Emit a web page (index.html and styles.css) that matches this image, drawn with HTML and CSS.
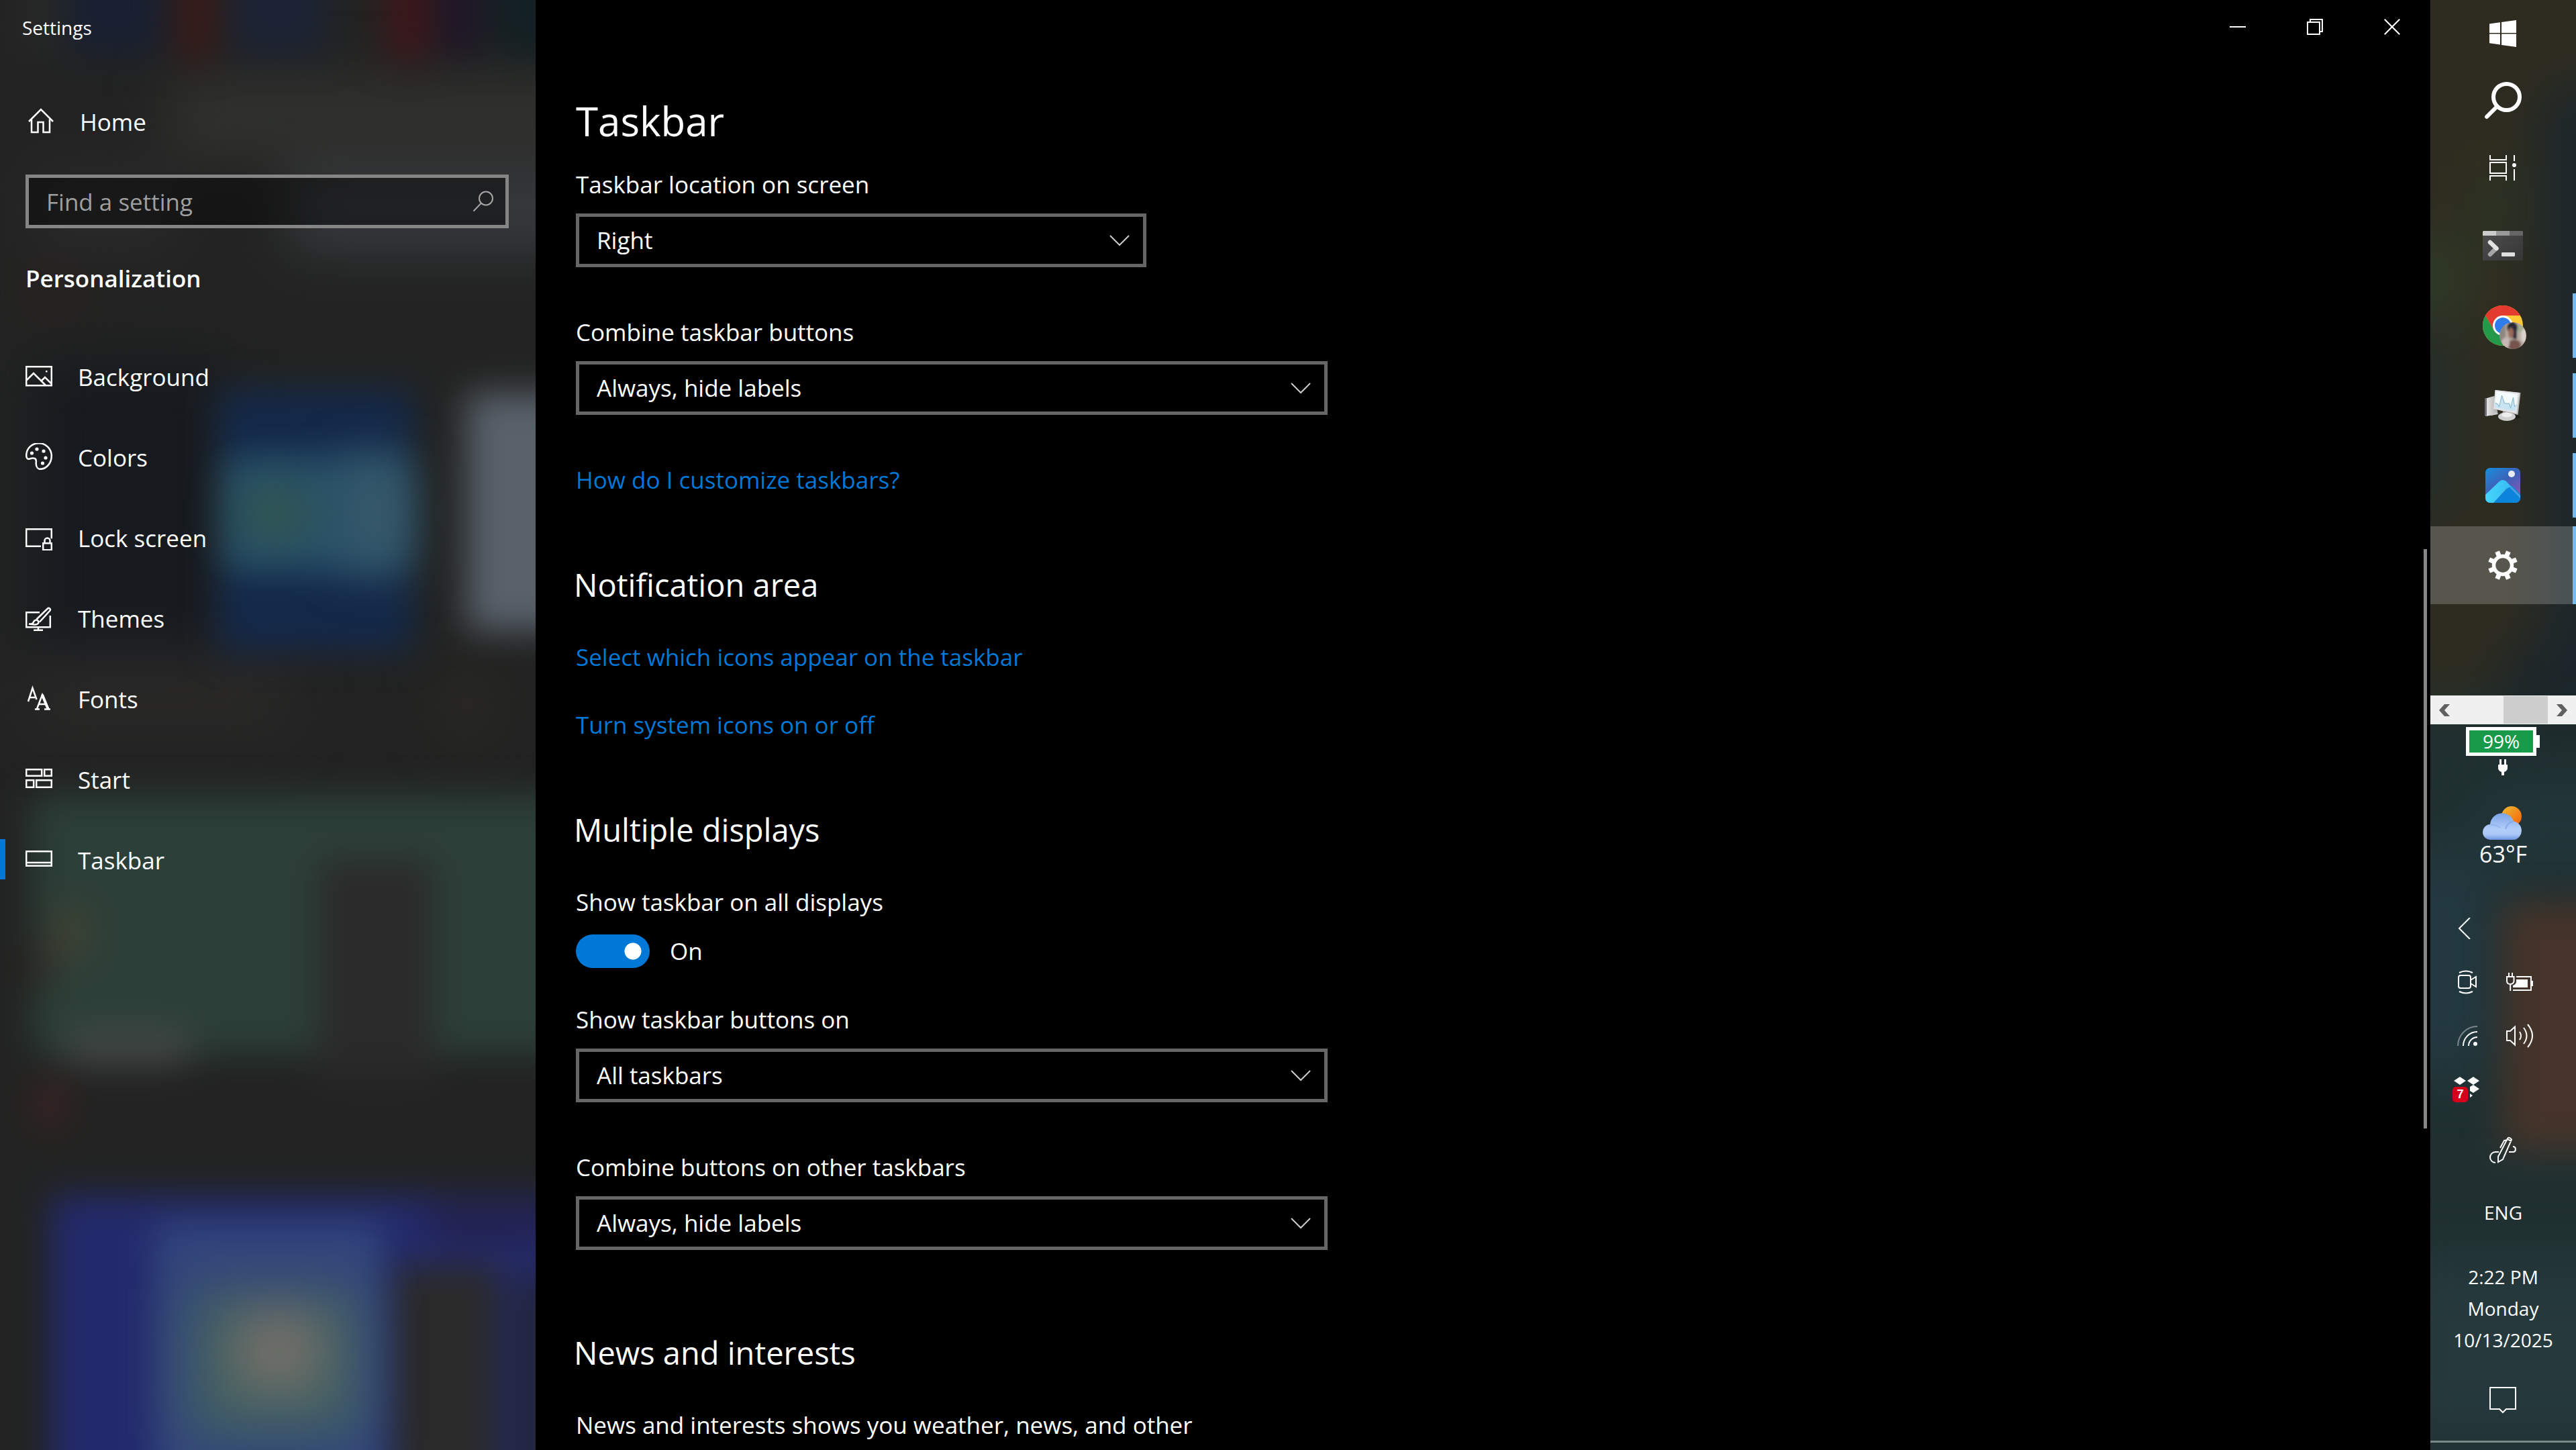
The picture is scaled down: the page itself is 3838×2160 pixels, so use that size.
FILE: index.html
```html
<!DOCTYPE html>
<html lang="en">
<head>
    <meta charset="utf-8">
    <title>Settings</title>
    <link rel="stylesheet" href="styles.css">
</head>
<body>
    <div class="desktop">
        <aside class="sidebar">
            <svg class="acrylic" viewBox="0 0 798 2160" preserveAspectRatio="none" aria-hidden="true">
                <defs>
                    <filter id="soft" x="-100%" y="-100%" width="300%" height="300%" color-interpolation-filters="sRGB"><feGaussianBlur stdDeviation="26"/></filter>
                    <filter id="softer" x="-100%" y="-100%" width="300%" height="300%" color-interpolation-filters="sRGB"><feGaussianBlur stdDeviation="40"/></filter>
                </defs>
                <rect width="798" height="2160" fill="#222322"/>
                <g filter="url(#softer)">
                    <rect x="250" y="110" width="640" height="130" fill="#30312e"/>
                    <rect x="430" y="255" width="460" height="120" fill="#37393d"/>
                    <rect x="50" y="250" width="210" height="120" fill="#2a2a2a"/>
                    <rect x="50" y="540" width="280" height="430" fill="#171a1f"/>
                    <rect x="50" y="970" width="380" height="130" fill="#292827"/>
                    <rect x="660" y="1000" width="70" height="100" fill="#2c2925"/>
                    <rect x="50" y="400" width="60" height="70" fill="#2d2121"/>
                </g>
                <g filter="url(#soft)">
                    <rect x="30" y="-60" width="60" height="140" fill="#272927"/>
                    <rect x="100" y="-60" width="145" height="140" fill="#192032"/>
                    <rect x="262" y="-60" width="60" height="150" fill="#391a18"/>
                    <rect x="345" y="-60" width="140" height="140" fill="#1c2335"/>
                    <rect x="575" y="-60" width="65" height="150" fill="#3e161a"/>
                    <rect x="655" y="-60" width="60" height="140" fill="#1f1529"/>
                    <rect x="735" y="-60" width="130" height="140" fill="#132024"/>
                    <rect x="325" y="580" width="290" height="390" fill="#14294a"/>
                    <rect x="330" y="680" width="280" height="170" fill="#26506a"/>
                    <rect x="695" y="585" width="200" height="355" fill="#59616b"/>
                    <rect x="48" y="1185" width="850" height="385" fill="#2c3f38"/>
                    <rect x="475" y="1280" width="170" height="330" fill="#2b2a2a"/>
                    <rect x="100" y="1535" width="180" height="50" fill="#454949"/>
                    <rect x="78" y="1350" width="55" height="80" fill="#3f4032"/>
                    <rect x="48" y="1410" width="30" height="60" fill="#332c28"/>
                    <rect x="52" y="1615" width="46" height="60" fill="#402224"/>
                    <rect x="75" y="1780" width="850" height="450" fill="#232a6c"/>
                    <rect x="640" y="1790" width="260" height="60" fill="#232250"/>
                    <rect x="230" y="1820" width="340" height="420" fill="#32457c"/>
                    <rect x="585" y="1885" width="160" height="360" fill="#2a2a2a"/>
                    <rect x="770" y="1900" width="120" height="360" fill="#22253a"/>
                </g>
                <g filter="url(#softer)">
                    <rect x="520" y="690" width="80" height="150" fill="#3c5b69"/>
                    <rect x="365" y="735" width="90" height="60" fill="#3b5a3c"/>
                    <rect x="280" y="1920" width="260" height="220" fill="#40605f"/>
                    <rect x="350" y="1955" width="130" height="115" fill="#77706a"/>
                </g>
            </svg>

            <div class="app-title">Settings</div>

            <a class="nav-item home" href="#">
                <svg class="nav-icon" viewBox="0 0 40 40"><path d="M2 21 20 3l18 18M6 17.500v19.500h9.500V22h8v15h9.500V17.500"/></svg>
                Home
            </a>

            <div class="search">
                <input class="search-input" type="text" placeholder="Find a setting" aria-label="Find a setting">
                <svg class="search-icon" viewBox="0 0 32 32"><circle cx="20" cy="11.500" r="10"/><path d="M13 18.500 1.500 30.500"/></svg>
            </div>

            <h2 class="category">Personalization</h2>

            <nav class="nav">
                <a class="nav-item" href="#">
                    <svg class="nav-icon" viewBox="0 0 40 40"><path d="M1.200 6.200h37.600v28H1.200zM2 26l10-10 18 18M24 27l5-5 10 10"/><path d="M30 12h2.500v2.500H30z" fill="#fff" stroke="none"/></svg>
                    Background
                </a>
                <a class="nav-item" href="#">
                    <svg class="nav-icon" viewBox="0 0 40 40"><path d="M20 .2C9.500.2 1.200 8 1.200 18.500c0 4 2 6 5 5 3-1 5-1.500 7.500-.5 3.500 1.500 1.800 5 2 8 .2 4 2.300 7.800 6 7.800C32 38.800 38.800 29 38.800 19S30.500.2 20 .2z"/><g fill="#fff" stroke="none"><circle cx="9.500" cy="15" r="2.600"/><circle cx="17" cy="9" r="2.600"/><circle cx="27" cy="12" r="2.600"/><circle cx="30" cy="22" r="2.600"/><circle cx="25.500" cy="30" r="2.600"/></g></svg>
                    Colors
                </a>
                <a class="nav-item" href="#">
                    <svg class="nav-icon" viewBox="0 0 40 40"><path d="M23 33.800H1.200V8.200h37.600v14M26.200 29.200h12.600v10H26.200zM28.500 29v-3.500a4 4 0 0 1 8 0V29"/></svg>
                    Lock screen
                </a>
                <a class="nav-item" href="#">
                    <svg class="nav-icon" viewBox="0 0 40 40"><path d="M21 12.200H1.200v22h35.600V17M19 34v5M12 38.800h14M5 29.500c4 0 6 0 7-3s5-4 6.800-1.500c2 3-1 5.500-4.800 5.500zM16.500 22.500 33 6.500c2-1.800 5 .8 3.500 3L21 26.500"/></svg>
                    Themes
                </a>
                <a class="nav-item" href="#">
                    <svg class="nav-icon" viewBox="0 0 40 40"><path d="M4 25 10.500 5l6 17M6 19h8" /><path d="M14 36.500h7M28 36.500h9M17 36 25 15l9 21M20 29h11" /><path d="m25 15 8.500 21" stroke-width="4"/></svg>
                    Fonts
                </a>
                <a class="nav-item" href="#">
                    <svg class="nav-icon" viewBox="0 0 40 40"><path d="M1.200 6.200h23v9.600h-23zM28.200 6.200h10.600v9.600H28.200zM1.200 22.200h11v10.600h-11zM16.200 22.200h22.600v10.600H16.200z"/></svg>
                    Start
                </a>
                <a class="nav-item selected" href="#">
                    <svg class="nav-icon" viewBox="0 0 40 40"><path d="M1.200 8.200h37.600v21.600H1.200zM1.200 25h37.600"/></svg>
                    Taskbar
                </a>
            </nav>
        </aside>

        <main class="content">
            <div class="window-buttons">
                <button class="window-button" aria-label="Minimize"><svg viewBox="0 0 24 24"><path d="M0 12h24"/></svg></button>
                <button class="window-button" aria-label="Restore"><svg viewBox="0 0 24 24"><path d="M1 5h18v18H1zM5 5V1h18v18h-4"/></svg></button>
                <button class="window-button" aria-label="Close"><svg viewBox="0 0 24 24"><path d="m.8.800 22.400 22.400M23.200.800.800 23.200"/></svg></button>
            </div>

            <div class="page">
                <h1 class="page-title">Taskbar</h1>

                <section class="section">
                    <div class="field">
                        <label for="location">Taskbar location on screen</label>
                        <div class="combo combo-narrow">
                            <select id="location"><option>Right</option></select>
                            <svg viewBox="0 0 30 17"><path d="m1 1 14 14L29 1"/></svg>
                        </div>
                    </div>
                    <div class="field">
                        <label for="combine">Combine taskbar buttons</label>
                        <div class="combo">
                            <select id="combine"><option>Always, hide labels</option></select>
                            <svg viewBox="0 0 30 17"><path d="m1 1 14 14L29 1"/></svg>
                        </div>
                    </div>
                    <a class="link" href="#">How do I customize taskbars?</a>
                </section>

                <section class="section">
                    <h2 class="section-title">Notification area</h2>
                    <a class="link" href="#">Select which icons appear on the taskbar</a>
                    <a class="link" href="#">Turn system icons on or off</a>
                </section>

                <section class="section">
                    <h2 class="section-title">Multiple displays</h2>
                    <div class="toggle-field">
                        <label for="all-displays">Show taskbar on all displays</label>
                        <div class="toggle-row">
                            <input class="toggle" id="all-displays" type="checkbox" role="switch" checked>
                            <span>On</span>
                        </div>
                    </div>
                    <div class="field">
                        <label for="show-on">Show taskbar buttons on</label>
                        <div class="combo">
                            <select id="show-on"><option>All taskbars</option></select>
                            <svg viewBox="0 0 30 17"><path d="m1 1 14 14L29 1"/></svg>
                        </div>
                    </div>
                    <div class="field">
                        <label for="combine-other">Combine buttons on other taskbars</label>
                        <div class="combo">
                            <select id="combine-other"><option>Always, hide labels</option></select>
                            <svg viewBox="0 0 30 17"><path d="m1 1 14 14L29 1"/></svg>
                        </div>
                    </div>
                </section>

                <section class="section">
                    <h2 class="section-title">News and interests</h2>
                    <p class="text">News and interests shows you weather, news, and other</p>
                </section>
            </div>
            <div class="page-scroll"></div>
        </main>

        <div class="taskbar">
            <svg class="acrylic" viewBox="0 0 217 2160" preserveAspectRatio="none" aria-hidden="true">
                <rect width="217" height="2160" fill="#203031"/>
                <g filter="url(#softer)">
                    <rect x="-90" y="-90" width="400" height="1130" fill="#2e2c20"/>
                    <rect x="170" y="130" width="140" height="860" fill="#1b262c"/>
                    <rect x="-60" y="360" width="110" height="110" fill="#2e3c29"/>
                    <rect x="70" y="250" width="60" height="120" fill="#2b3424"/>
                    <rect x="-80" y="500" width="110" height="260" fill="#212e2c"/>
                    <rect x="110" y="960" width="200" height="130" fill="#1c262a"/>
                    <rect x="-60" y="1270" width="160" height="330" fill="#233940"/>
                    <rect x="80" y="1180" width="230" height="110" fill="#22363b"/>
                    <rect x="-60" y="1880" width="400" height="260" fill="#26393d"/>
                </g>
                <rect x="108" y="1345" width="220" height="370" fill="#46342a" filter="url(#soft)"/>
            </svg>

            <button class="task-button" aria-label="Start">
                <svg width="40" height="40" viewBox="0 0 40 40" fill="#fff"><path d="M0 5.500 16 3.300V19H0zM18 3 40 0v19H18zM0 20.500h16v16L0 34.300zM18 20.500h22V40l-22-3z"/></svg>
            </button>
            <button class="task-button" aria-label="Search">
                <svg width="56" height="56" viewBox="0 0 56 56" fill="none" stroke="#fff" stroke-width="6" stroke-linecap="round"><circle cx="33.500" cy="22.500" r="19.500"/><path d="M19.500 36.500 4 52"/></svg>
            </button>
            <button class="task-button" aria-label="Task View">
                <svg width="40" height="40" viewBox="0 0 40 40" fill="none" stroke="#fff" stroke-width="2"><path d="M1 1v7h24V1M1 12h24v16H1zM1 39v-7h24v7M37 1v9M37 22v17"/><circle cx="37" cy="16" r="3" fill="#fff" stroke="none"/></svg>
            </button>

            <div class="apps">
                <button class="app-button" aria-label="Terminal">
                    <svg width="60" height="44" viewBox="0 0 60 44">
                        <defs><linearGradient id="term" x2="1" y2="1"><stop stop-color="#4e4e4e"/><stop offset="1" stop-color="#363636"/></linearGradient></defs>
                        <rect width="60" height="44" rx="1.500" fill="url(#term)"/>
                        <path d="M1 0h19v7H0V1z" fill="#ccc"/><path d="M20 0h20v7H20z" fill="#999"/><path d="M40 0h19l1 1v6H40z" fill="#666"/>
                        <path d="m11 35 9-9" stroke="#a5a5a5" stroke-width="6.500" stroke-linecap="round"/>
                        <path d="m11 17 9.500 9" stroke="#e2e2e2" stroke-width="6.500" stroke-linecap="round"/>
                        <rect x="28" y="32" width="20" height="6" rx="1" fill="#dedede"/>
                    </svg>
                </button>
                <button class="app-button running" aria-label="Google Chrome">
                    <svg width="70" height="70" viewBox="-35 -35 70 70">
                        <defs>
                            <clipPath id="face"><circle cx="15" cy="15" r="20"/></clipPath>
                            <filter id="haze"><feGaussianBlur stdDeviation="1.500"/></filter>
                        </defs>
                        <circle r="30" fill="#fcc934"/>
                        <path d="M-26 -15A30 30 0 0 1 26 -15H0L-13 7.500z" fill="#e33b2e"/>
                        <path d="M-26 -15A30 30 0 0 0 0 30L13 7.500-13 7.500z" fill="#25994a"/>
                        <circle r="15" fill="#fff"/><circle r="12" fill="#2f7ded"/>
                        <g clip-path="url(#face)"><g filter="url(#haze)">
                            <path d="M-8-8h46v46H-8z" fill="#b9aca3"/>
                            <path d="M-6 0 4-6v40h-10z" fill="#8b867f"/>
                            <ellipse cx="24" cy="4" rx="8" ry="6" fill="#a5ae93"/>
                            <ellipse cx="14" cy="3" rx="8" ry="9" fill="#282833"/>
                            <path d="M15 0h6v20h-6z" fill="#25283a"/>
                            <ellipse cx="12" cy="11" rx="4" ry="8" fill="#9b6a58"/>
                            <ellipse cx="17" cy="29" rx="10" ry="8" fill="#75544b"/>
                            <ellipse cx="31" cy="15" rx="4" ry="10" fill="#dcd4cd"/>
                            <ellipse cx="4" cy="26" rx="6" ry="8" fill="#c9b9b5"/>
                        </g></g>
                    </svg>
                </button>
                <button class="app-button running" aria-label="Performance Monitor">
                    <svg width="56" height="48" viewBox="0 0 56 48">
                        <defs><linearGradient id="metal" x2="1"><stop stop-color="#f0f0f0"/><stop offset="1" stop-color="#a8a8a8"/></linearGradient></defs>
                        <path d="m1 14 14-4 6 27-18 3-2-2z" fill="url(#metal)"/><path d="m1 14 3-1v27l-3-2z" fill="#6d6b75"/>
                        <path d="m9 38 10-4v3l-8 2z" fill="#ccc"/>
                        <ellipse cx="45" cy="41" rx="9" ry="3" fill="#000" opacity=".3"/>
                        <path d="m28 32 12 1 1 6H27z" fill="#999"/>
                        <ellipse cx="34" cy="40.500" rx="13" ry="6.500" fill="#cfcfcf"/><ellipse cx="34" cy="38" rx="8" ry="3.500" fill="#eee"/>
                        <path d="m16.500 1 38 4-4 33L14 29z" fill="#b7b7b7"/><path d="m16.500 1 36 4-4 31L14 29z" fill="#e2e2e2"/>
                        <path d="m18 3 32 4-3 26-31-6z" fill="#f5fafc"/>
                        <path d="m16.500 20 4 2 2 4 4-17 4 12h7l2 7 4-16 2 14 3-3-1.500 10-31-6z" fill="#c8e3f2"/>
                        <path d="m16.500 20 4 2 2 4 4-17 4 12h7l2 7 4-16 2 14 3-3" fill="none" stroke="#81b4cf"/>
                    </svg>
                </button>
                <button class="app-button running" aria-label="Photos">
                    <svg width="52" height="52" viewBox="0 0 52 52">
                        <defs>
                            <linearGradient id="sky" x2=".7" y2="1"><stop stop-color="#168ede"/><stop offset=".5" stop-color="#3d62b8"/><stop offset="1" stop-color="#8a55bb"/></linearGradient>
                            <linearGradient id="peak" x2="1" y2="0"><stop stop-color="#45d5fb"/><stop offset="1" stop-color="#35bdf3"/></linearGradient>
                            <clipPath id="tile"><rect width="52" height="52" rx="7"/></clipPath>
                        </defs>
                        <g clip-path="url(#tile)">
                            <path d="M0 0h52v52H0z" fill="url(#sky)"/>
                            <path d="M8 56 33 30l7-3 16 16v13z" fill="#0b84dc"/>
                            <path d="m37 30 15 15v-4L38 27z" fill="#4c9fe0"/>
                            <path d="M0 40 21 20q5-4 10 0l8 8.500q-4-.5-8 3L12 52H0z" fill="url(#peak)"/>
                        </g>
                        <circle cx="39" cy="9" r="5" fill="#e9edf3"/>
                    </svg>
                </button>
                <button class="app-button running active" aria-label="Settings">
                    <svg width="46" height="46" viewBox="-23 -23 46 46" fill="none" stroke="#fff">
                        <circle r="13.500" stroke-width="5.500"/>
                        <path stroke-width="7" d="M8.400-20.300 5.700-13.900M20.300-8.400 13.900-5.700M20.300 8.400 13.900 5.700M8.400 20.300 5.700 13.900M-8.400 20.300-5.700 13.900M-20.300 8.400-13.900 5.700M-20.300-8.400-13.900-5.700M-8.400-20.300-5.700-13.900"/>
                    </svg>
                </button>
            </div>

            <div class="toolbar-scroll">
                <button class="scroll-arrow" aria-label="Scroll left"><svg width="16" height="18" viewBox="0 0 16 18"><path d="M8 0h8L8 9l8 9H8L0 9z" fill="#606060"/></svg></button>
                <div class="scroll-track"><div class="scroll-thumb"></div></div>
                <button class="scroll-arrow" aria-label="Scroll right"><svg width="16" height="18" viewBox="0 0 16 18"><path d="M8 0H0l8 9-8 9h8l8-9z" fill="#606060"/></svg></button>
            </div>

            <div class="battery"><div class="battery-level">99%</div><div class="battery-tip"></div></div>
            <svg class="plug" width="14" height="24" viewBox="0 0 14 24" fill="#fff"><path d="M2 0h3v8h4V0h3v8h2v5q0 4-5 6v5H5v-5q-5-2-5-6V8h2z"/></svg>

            <div class="weather">
                <svg width="62" height="50" viewBox="0 0 62 50">
                    <defs>
                        <linearGradient id="sun" x2="1" y2="1"><stop stop-color="#f0bd35"/><stop offset="1" stop-color="#f05d05"/></linearGradient>
                        <linearGradient id="cloud" x2="0" y2="1"><stop stop-color="#7ba3ea"/><stop offset=".6" stop-color="#b2cdf8"/><stop offset=".8" stop-color="#aac8f6"/><stop offset="1" stop-color="#6c94e0"/></linearGradient>
                    </defs>
                    <circle cx="43" cy="15" r="15" fill="url(#sun)"/>
                    <path d="M12 50a11.500 11.500 0 0 1-1-23 18 18 0 0 1 35-4.500A14 14 0 0 1 47 50z" fill="url(#cloud)"/>
                    <path d="M34 34q2-9 11-11.500" fill="none" stroke="#86abec" stroke-width="2"/><path d="M11 28q9-1 15 4" fill="none" stroke="#93b6f0" stroke-width="2"/>
                </svg>
                <div class="temperature">63°F</div>
            </div>

            <div class="tray">
                <button class="tray-button wide" aria-label="Show hidden icons"><svg width="28" height="32" viewBox="0 0 28 32"><path d="M18 0 2 16l16 16"/></svg></button>
                <button class="tray-button" aria-label="Meet Now"><svg width="30" height="36" viewBox="0 0 30 36"><rect x="2" y="8" width="18" height="19" rx="3"/><path d="m20 15 8-5v15l-8-5M3 4q10-5 20 0M3 32q10 5 20 0"/></svg></button>
                <button class="tray-button" aria-label="Power"><svg width="40" height="28" viewBox="0 0 40 28"><path d="M15 6h22v20H10M4 0v6M9 0v6M1 6h10.500v7q-1 4-5.500 4t-5-4zM6.200 17v10"/><path d="M15 10h17v12H10v-3q4-1 5-5zM37 12h3v8h-3z" fill="#fff" stroke="none"/></svg></button>
                <button class="tray-button" aria-label="Wi-Fi"><svg width="30" height="30" viewBox="0 0 30 30"><path d="M1 30A29 29 0 0 1 30 1" opacity=".4"/><path d="M9 30A21 21 0 0 1 30 9M17 30A13 13 0 0 1 30 17"/><circle cx="27" cy="27" r="3" fill="#fff" stroke="none"/></svg></button>
                <button class="tray-button" aria-label="Volume"><svg width="40" height="36" viewBox="0 0 40 36"><path d="M1 11h5l7-6.500v27L6 25H1zM20 12q4 6 0 12M26 6q9 12 0 24M32 1q14 17 0 34"/></svg></button>
                <button class="tray-button" aria-label="Dropbox">
                    <svg width="44" height="38" viewBox="0 0 44 38"><g fill="#fff" stroke="none"><path d="m2 6 9-6 9 6-9 6zM22 6l9-6 9 6-9 6zM26 15l5-3 9 6-9 6-5-3zM26 25l4 3-4 3z"/></g></svg>
                    <span class="badge">7</span>
                </button>
            </div>

            <button class="task-button" aria-label="Windows Ink Workspace">
                <svg width="40" height="40" viewBox="0 0 40 40" fill="none" stroke="#fff" stroke-width="2"><path d="M14 23H9A8 8 0 0 0 9 39M29 23h7c4-1 4-8-1-8M13 38v-8L27 3q3-3 6 1.500L20 34zM27 4l6 3M16 17l6-11q3-1 4 0"/></svg>
            </button>
            <div class="language">ENG</div>
            <div class="clock">2:22 PM<br>Monday<br>10/13/2025</div>
            <button class="task-button notifications" aria-label="Notifications">
                <svg width="40" height="40" viewBox="0 0 40 40" fill="none" stroke="#fff" stroke-width="2"><path d="M1 1h38v32H25l-5 5-5-5H1z"/></svg>
            </button>
            <button class="show-desktop" aria-label="Show desktop"></button>
        </div>
    </div>
</body>
</html>
```

FILE: styles.css
```css
* {
    box-sizing: border-box;
}
body {
    margin: 0;
    background: #000;
    color: #fff;
    font-family: "Segoe UI", "Open Sans", sans-serif;
    font-size: 35px;
    line-height: 50px;
}
button {
    padding: 0;
    border: 0;
    background: none;
    color: inherit;
    font: inherit;
}
h1, h2, p {
    margin: 0;
}
.desktop {
    display: flex;
    height: 100vh;
    overflow: hidden;
}
.acrylic {
    position: absolute;
    top: 0;
    left: 0;
    z-index: -1;
    width: 100%;
    height: 100%;
}

/* left navigation */
.sidebar {
    position: relative;
    z-index: 0;
    flex: none;
    width: 798px;
    overflow: hidden;
}
.app-title {
    height: 80px;
    padding-left: 33px;
    font-size: 28px;
    line-height: 82px;
}
.nav-item {
    display: flex;
    align-items: center;
    gap: 38px;
    height: 120px;
    padding: 4px 0 0 38px;
    color: #fff;
    text-decoration: none;
}
.nav-item.home {
    height: 200px;
    margin-bottom: -20px;
    padding-left: 41px;
}
.nav-icon {
    width: 40px;
    height: 40px;
    margin-bottom: 4px;
    fill: none;
    stroke: #fff;
    stroke-width: 2.5px;
}
.nav-item.selected {
    background: linear-gradient(#0078d7, #0078d7) 0 50% / 8px 60px no-repeat;
}
.search {
    position: relative;
    margin: 0 40px 50px 38px;
}
.search-input {
    display: block;
    width: 100%;
    height: 80px;
    padding: 0 80px 0 26px;
    border: 5px solid #858585;
    border-radius: 0;
    background: rgba(0, 0, 0, 0.4);
    color: #fff;
    font: inherit;
}
.search-input::placeholder {
    color: #9f9f9f;
    opacity: 1;
}
.search-icon {
    position: absolute;
    top: 24px;
    right: 22px;
    width: 32px;
    height: 32px;
    fill: none;
    stroke: #a6a6a6;
    stroke-width: 2px;
}
.category {
    padding-left: 38px;
    margin-bottom: 60px;
    font-size: 35px;
    font-weight: 600;
}

/* settings page */
.content {
    position: relative;
    flex: 1;
    overflow: hidden;
}
.window-buttons {
    display: flex;
    justify-content: flex-end;
}
.window-button {
    width: 115px;
    height: 80px;
}
.window-button svg {
    display: block;
    width: 24px;
    height: 24px;
    margin: 0 auto;
    fill: none;
    stroke: #fff;
    stroke-width: 2px;
}
.page {
    padding: 60px 60px 0;
}
.page-title {
    margin-bottom: 30px;
    font-size: 60px;
    font-weight: 400;
    line-height: 80px;
}
.section {
    display: flex;
    flex-direction: column;
    align-items: flex-start;
    margin-bottom: 101px;
}
.section-title {
    margin: 0 0 53px -3px;
    font-size: 47px;
    font-weight: 400;
    line-height: 60px;
}
.field {
    width: 1120px;
    max-width: 100%;
    margin-bottom: 72px;
}
.field:last-child {
    margin-bottom: 22px;
}
.field label,
.toggle-field label {
    display: block;
}
.combo {
    position: relative;
    margin-top: 18px;
}
.combo-narrow {
    width: 850px;
}
.combo select {
    display: block;
    width: 100%;
    height: 80px;
    padding: 0 26px;
    border: 5px solid #666;
    border-radius: 0;
    background: #000;
    color: #fff;
    font: inherit;
    appearance: none;
}
.combo svg {
    position: absolute;
    top: 32px;
    right: 25px;
    width: 30px;
    height: 17px;
    fill: none;
    stroke: #ccc;
    stroke-width: 2px;
    pointer-events: none;
}
.link {
    color: #0078d7;
    text-decoration: none;
}
.link + .link {
    margin-top: 51px;
}
.toggle-field {
    margin-bottom: 52px;
}
.toggle-row {
    display: flex;
    align-items: center;
    gap: 30px;
    margin-top: 23px;
}
.toggle {
    width: 110px;
    height: 50px;
    margin: 0;
    border-radius: 25px;
    background: radial-gradient(circle at 85px 25px, #fff 12px, #0078d7 13px);
    appearance: none;
}
.text {
    white-space: nowrap;
}
.page-scroll {
    position: absolute;
    top: 818px;
    right: 5px;
    width: 5px;
    height: 863px;
    background: #868686;
}

/* taskbar on the right edge */
.taskbar {
    position: relative;
    z-index: 0;
    display: flex;
    flex: none;
    flex-direction: column;
    align-items: center;
    width: 217px;
    overflow: hidden;
}
.task-button {
    display: flex;
    flex: none;
    align-items: center;
    justify-content: center;
    width: 100%;
    height: 100px;
    padding-right: 1px;
}
.apps {
    display: flex;
    flex-direction: column;
    gap: 3px;
    width: 100%;
    margin: 8px 0 136px;
}
.app-button {
    display: flex;
    align-items: center;
    justify-content: center;
    height: 116px;
    padding-right: 1px;
}
.app-button.running {
    background: linear-gradient(#76b9ed, #76b9ed) 100% 50% / 5px 96px no-repeat;
}
.app-button.active {
    background: linear-gradient(#76b9ed, #76b9ed) 100% 50% / 5px 100% no-repeat, rgba(255, 255, 255, 0.2);
}
.toolbar-scroll {
    display: flex;
    width: 100%;
    height: 43px;
    background: #f0f0f0;
}
.scroll-arrow {
    display: flex;
    flex: none;
    align-items: center;
    justify-content: center;
    width: 42px;
}
.scroll-track {
    display: flex;
    flex: 1;
    justify-content: flex-end;
    padding: 1px 0;
}
.scroll-thumb {
    width: 50%;
    background: #cdcdcd;
}
.battery {
    display: flex;
    align-items: center;
    margin: 4px 1px 5px 0;
}
.battery-level {
    width: 105px;
    height: 43px;
    border: 5px solid #fff;
    background: #189a4a;
    font-size: 28px;
    line-height: 33px;
    text-align: center;
}
.battery-tip {
    width: 5px;
    height: 19px;
    background: #fff;
}
.plug {
    margin-right: 1px;
}
.weather {
    display: flex;
    flex-direction: column;
    align-items: center;
    margin: 46px 0 50px;
}
.temperature {
    font-size: 34px;
    line-height: 42px;
}
.tray {
    display: grid;
    grid-template-columns: 78px 78px;
    grid-auto-rows: 80px;
    margin-right: 29px;
}
.tray-button {
    position: relative;
    display: flex;
    align-items: center;
    justify-content: center;
}
.tray-button.wide {
    grid-column: 1 / 3;
    width: 78px;
}
.tray-button svg {
    fill: none;
    stroke: #fff;
    stroke-width: 2px;
}
.badge {
    position: absolute;
    bottom: 21px;
    left: 17px;
    width: 23px;
    height: 23px;
    border-radius: 5px;
    background: #d6001c;
    font: bold 18px/23px "Liberation Sans", sans-serif;
    text-align: center;
}
.language,
.clock {
    font-size: 28px;
    line-height: 47px;
    text-align: center;
}
.language {
    margin: 20px 0 49px;
}
.notifications {
    margin: 16px 0 10px;
}
.show-desktop {
    flex: 1;
    width: 100%;
    border-top: 3px solid #7c898a;
}
```
